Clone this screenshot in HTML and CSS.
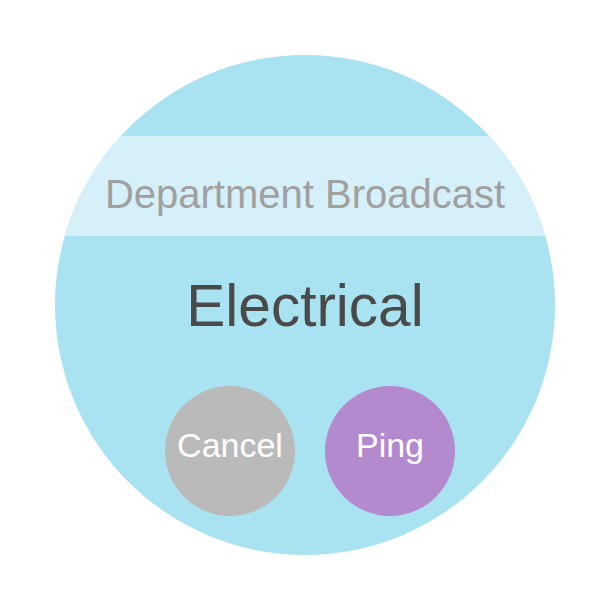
FILE: index.html
```html
<!DOCTYPE html>
<html>
<head>
<meta charset="utf-8">
<link rel="stylesheet" href="styles.css">
</head>
<body>
<div class="page">
  <div class="watch">
    <div class="band"><span class="subtitle">Department Broadcast</span></div>
    <div class="title">Electrical</div>
    <div class="actions">
      <button class="btn btn-cancel">Cancel</button>
      <button class="btn btn-ping">Ping</button>
    </div>
  </div>
</div>
</body>
</html>
```
FILE: styles.css
```css
html, body {
  margin: 0;
  padding: 0;
  background: #ffffff;
}
.page {
  width: 611px;
  height: 611px;
  padding: 55px 0 0 55px;
  box-sizing: border-box;
  font-family: "Liberation Sans", Arial, sans-serif;
}
.watch {
  width: 500px;
  height: 500px;
  border-radius: 50%;
  background: #a9e2f0;
  overflow: hidden;
  padding-top: 81px;
  box-sizing: border-box;
  display: flex;
  flex-direction: column;
  align-items: center;
}
.band {
  width: 100%;
  height: 100px;
  box-sizing: border-box;
  padding-top: 38px;
  background: #d6f0f9;
  text-align: center;
}
.subtitle {
  display: block;
  font-size: 40px;
  line-height: 40px;
  color: #a0a0a0;
  white-space: nowrap;
}
.title {
  margin-top: 41px;
  font-size: 58.5px;
  line-height: 58px;
  color: #4a4a4a;
  white-space: nowrap;
}
.actions {
  margin-top: 51px;
  margin-left: 10px;
  display: flex;
  gap: 30px;
}
.btn {
  width: 130px;
  height: 130px;
  border-radius: 50%;
  border: none;
  padding: 0 0 13px 0;
  margin: 0;
  display: flex;
  align-items: center;
  justify-content: center;
  font-family: "Liberation Sans", Arial, sans-serif;
  font-size: 34px;
  line-height: 34px;
  color: #ffffff;
  box-sizing: border-box;
}
.btn-cancel {
  background: #bababa;
}
.btn-ping {
  background: #b48acf;
}
```
